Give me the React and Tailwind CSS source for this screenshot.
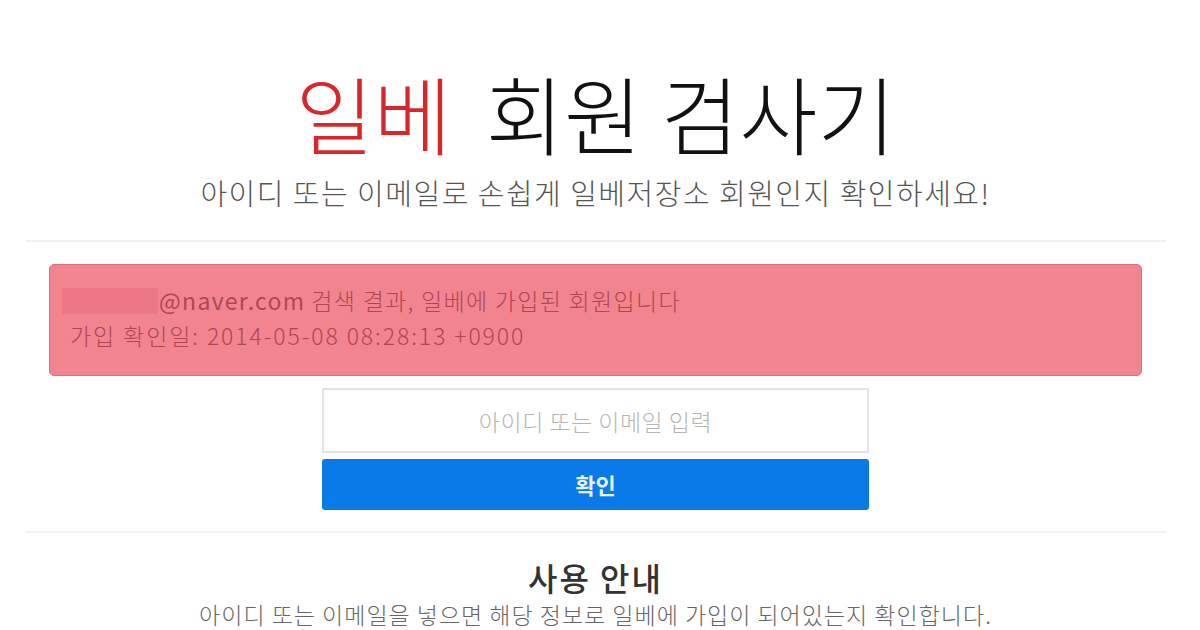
export default function App() {
  return (
    <div
      className="w-[1200px] h-[630px] overflow-hidden bg-white flex flex-col items-center pr-[9px]"
      style={{ fontFamily: '"Noto Sans CJK KR", "Noto Sans", sans-serif' }}
    >
      {/* Title */}
      <h1 className="mt-[52px] h-[118px] flex items-center text-[85px] leading-none font-light text-[#111]">
        <span className="text-[#d9262c]">일베</span>
        <span className="ml-[34px]">회원 검사기</span>
      </h1>
      <p className="mt-[4px] text-[29px] leading-[36px] font-light text-[#555] tracking-[1.5px]">
        아이디 또는 이메일로 손쉽게 일베저장소 회원인지 확인하세요!
      </p>

      <div className="mt-[30px] w-[1140px] h-[2px] bg-[#f1f1f1]" />

      {/* Result alert */}
      <div className="mt-[22px] w-[1093px] h-[112px] rounded-[5px] border border-[#e06d7a] bg-[#f2848f] px-[20px] pt-[18px] text-[23px] leading-[35px] font-light text-[#b04652]">
        <div className="flex items-center tracking-[1.3px]">
          <span className="inline-block w-[96px] h-[26px] bg-[#ee7785] -ml-[8px] mr-[1px]" />
          <span className="font-normal">@naver.com</span>
          <span className="ml-[6px]">검색 결과, 일베에 가입된 회원입니다</span>
        </div>
        <div className="tracking-[1.9px]">가입 확인일: 2014-05-08 08:28:13 +0900</div>
      </div>

      {/* Form */}
      <div className="mt-[12px] w-[547px] flex flex-col">
        <input
          type="text"
          placeholder="아이디 또는 이메일 입력"
          className="h-[65px] w-full border-2 border-[#e4e4e4] bg-white text-center text-[23px] font-light tracking-[0.5px] placeholder:text-[#b5b5b5] focus:outline-none"
        />
        <button className="mt-[6px] h-[51px] w-full rounded-[3px] bg-[#0a7ae8] text-[22px] font-bold text-[#e8f2ff]">
          확인
        </button>
      </div>

      <div className="mt-[21px] w-[1140px] h-[2px] bg-[#f2f2f2]" />

      {/* Guide */}
      <h2 className="mt-[24px] text-[32px] leading-[40px] font-medium text-[#333] tracking-[2px]">사용 안내</h2>
      <p className="mt-[2px] text-[23px] leading-[30px] font-light text-[#666] tracking-[1px]">
        아이디 또는 이메일을 넣으면 해당 정보로 일베에 가입이 되어있는지 확인합니다.
      </p>
    </div>
  );
}
